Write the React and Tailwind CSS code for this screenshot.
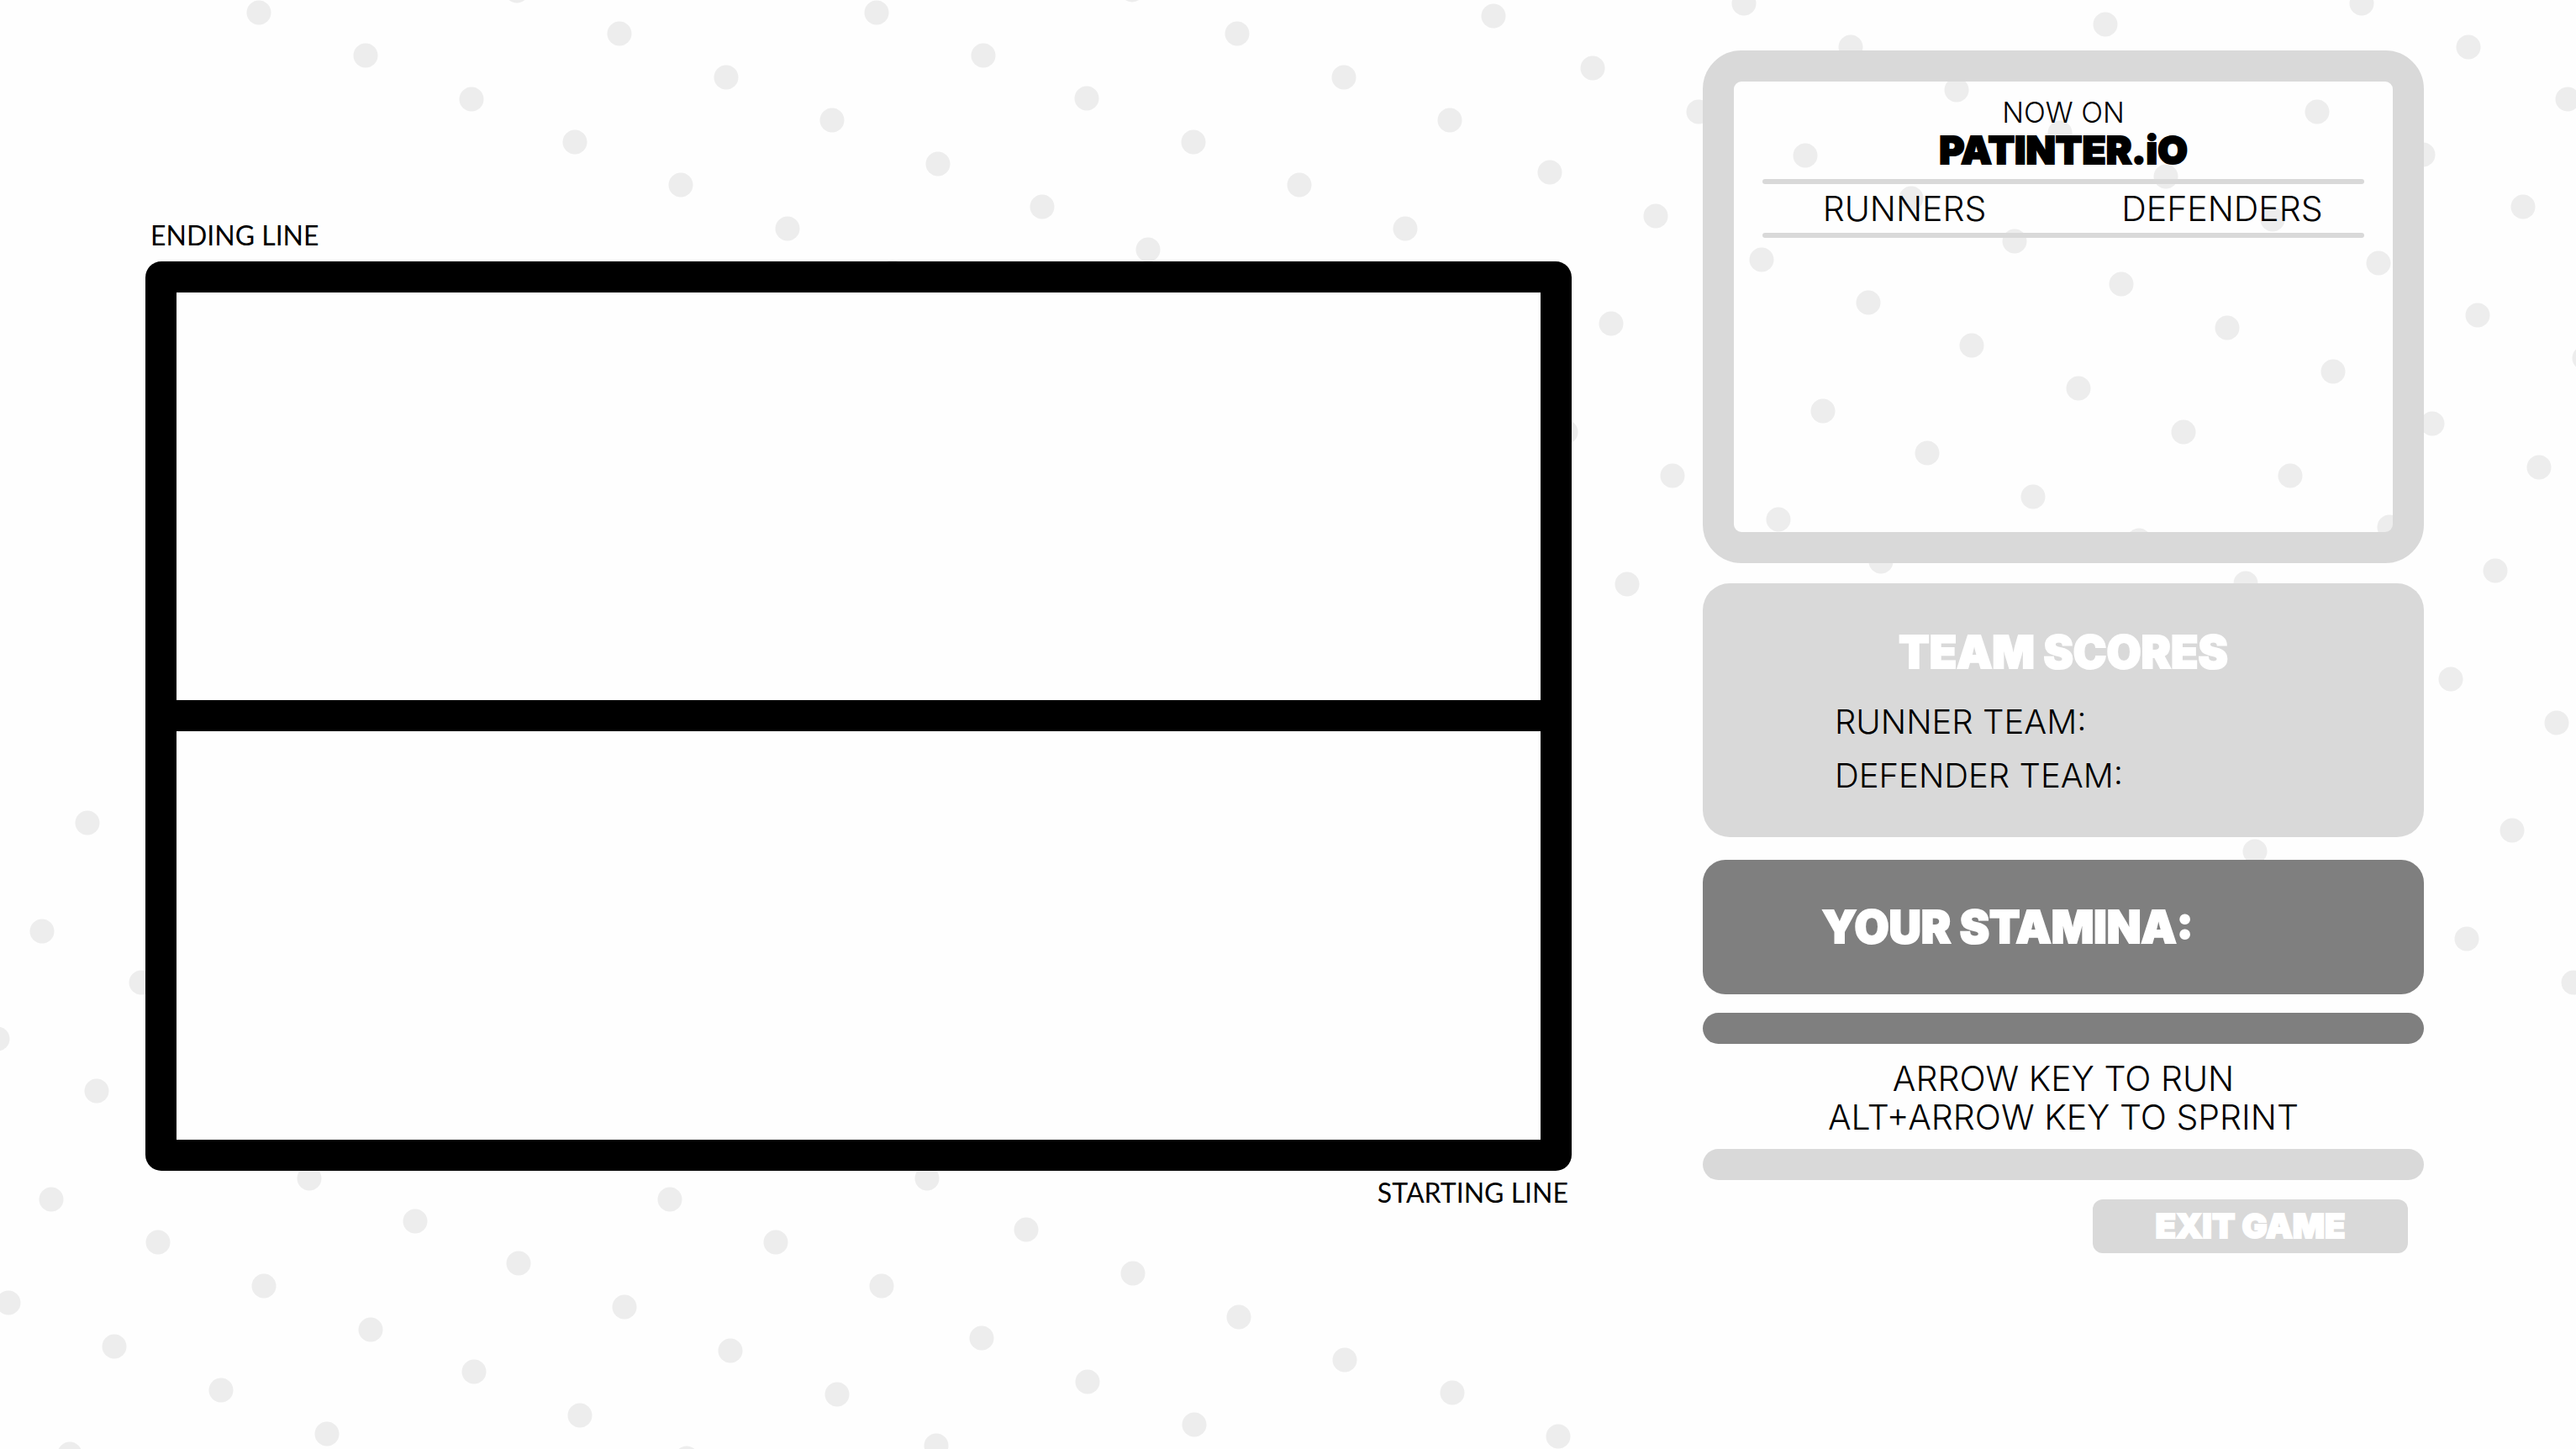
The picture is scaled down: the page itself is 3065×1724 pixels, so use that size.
const DOTS = [
  [308, 15], [435, 66], [561, 118], [684, 169], [810, 220], [937, 272], [615, -11], [737, 40], [864, 92], [990, 143],
  [1043, 15], [1170, 66], [1293, 117], [1420, 169], [1546, 220], [1672, 272], [1116, 195], [1240, 246], [1366, 297],
  [1347, -12], [1472, 40], [1599, 92], [1725, 143], [1777, 19], [1895, 81], [2021, 133], [1844, 205], [1970, 257],
  [1917, 385], [1863, 514], [1990, 566], [1936, 695], [1062, 324], [2075, 4], [2202, 56], [2505, 29], [2810, 4],
  [2937, 56], [3055, 118], [2328, 107], [2757, 133], [2148, 185], [2451, 158], [2883, 184], [2577, 210], [2274, 236],
  [2704, 261], [3002, 246], [2397, 287], [2096, 309], [2830, 313], [2524, 338], [2223, 360], [2650, 390], [2948, 375],
  [2346, 411], [2776, 442], [2473, 462], [3075, 426], [2169, 489], [2598, 514], [2894, 504], [2293, 539], [2725, 566],
  [3021, 556], [2419, 591], [2116, 618], [2545, 643], [2843, 627], [2238, 668], [2672, 694], [2969, 679], [2916, 808],
  [3042, 860], [2989, 988], [2683, 1013], [2935, 1117], [3062, 1169], [104, 979], [50, 1108], [168, 1169], [-3, 1236],
  [115, 1298], [61, 1427], [368, 1402], [494, 1453], [188, 1478], [314, 1530], [10, 1550], [136, 1602], [263, 1654],
  [389, 1706], [83, 1730], [441, 1582], [564, 1632], [690, 1684], [817, 1735], [617, 1503], [743, 1555], [869, 1607],
  [996, 1659], [797, 1427], [923, 1478], [1103, 1402], [1221, 1463], [1348, 1515], [1474, 1567], [1600, 1618],
  [1728, 1657], [1854, 1709], [1049, 1530], [1168, 1592], [1294, 1644], [1421, 1695], [1114, 1720],
];

function DotBackdrop() {
  return (
    <svg
      className="absolute inset-0 h-full w-full"
      viewBox="0 0 3065 1724"
      preserveAspectRatio="xMidYMid slice"
      aria-hidden="true"
    >
      {DOTS.map(([x, y]) => (
        <circle key={`${x}-${y}`} cx={x} cy={y} r="14.5" fill="#ededed" />
      ))}
    </svg>
  );
}

function Arena() {
  return (
    <section className="min-w-0 flex-1 pt-[200px] font-[Lato,sans-serif] text-[32px] leading-10">
      <p className="mb-[11px] pl-[6px]">ENDING LINE</p>
      <div className="flex flex-col gap-[37px] rounded-[19px] bg-black p-[37px]">
        <div className="aspect-[1623/485] bg-[#fefefe]" />
        <div className="aspect-[1623/486] bg-[#fefefe]" />
      </div>
      <p className="mt-[6px] pr-1 text-right">STARTING LINE</p>
    </section>
  );
}

function Divider() {
  return <hr className="mx-[34px] h-[6px] rounded-full border-0 bg-[#d9d9d9]" />;
}

function NowOn() {
  return (
    <section className="rounded-[46px] border-[37px] border-[#d9d9d9] pt-[17px] text-center">
      <p className="text-[34px] leading-10">NOW ON</p>
      <h1 className="mb-[11px] text-[46px] leading-[48px] font-black [-webkit-text-stroke:2px_#000]">PATINTER.iO</h1>
      <Divider />
      <div className="mx-[14px] grid grid-cols-2 text-[41px] leading-[58px]">
        <h2>RUNNERS</h2>
        <h2>DEFENDERS</h2>
      </div>
      <Divider />
      <div className="mx-[14px] grid min-h-[350px] grid-cols-2">
        <ul />
        <ul />
      </div>
    </section>
  );
}

function TeamScores() {
  return (
    <section className="mt-6 rounded-[32px] bg-[#d9d9d9] pt-[58px] pb-[41px]">
      <h2 className="mb-[27px] text-center text-[53px] leading-[48px] font-black text-white [-webkit-text-stroke:2px_#fff]">
        TEAM SCORES
      </h2>
      <div className="pl-[157px] text-[40px] leading-[64px]">
        <p>RUNNER TEAM:</p>
        <p>DEFENDER TEAM:</p>
      </div>
    </section>
  );
}

export default function App() {
  return (
    <div className="relative min-h-screen overflow-hidden bg-[#fefefe] text-black">
      <DotBackdrop />
      <main className="relative flex gap-[156px] pt-[60px] pr-[181px] pl-[173px]">
        <Arena />
        <aside className="w-[858px] shrink-0 font-[Inter,sans-serif] font-light">
          <NowOn />
          <TeamScores />
          <section className="mt-[27px] rounded-[27px] bg-[#7f7f7f] py-14 pl-[142px]">
            <h2 className="text-[53px] leading-[48px] font-black text-white [-webkit-text-stroke:2px_#fff]">
              YOUR STAMINA:
            </h2>
          </section>
          <div className="mt-[22px] h-[37px] rounded-full bg-[#7f7f7f]" />
          <div className="mt-[18px] mb-[15px] text-center text-[41px] leading-[46px]">
            <p>ARROW KEY TO RUN</p>
            <p>ALT+ARROW KEY TO SPRINT</p>
          </div>
          <div className="h-[37px] rounded-full bg-[#d9d9d9]" />
          <div className="mt-[23px] flex justify-end pr-[19px]">
            <button
              type="button"
              className="h-16 w-[375px] cursor-pointer rounded-xl bg-[#d9d9d9] text-[40px] leading-[64px] font-black text-white [-webkit-text-stroke:2px_#fff]"
            >
              EXIT GAME
            </button>
          </div>
        </aside>
      </main>
    </div>
  );
}
